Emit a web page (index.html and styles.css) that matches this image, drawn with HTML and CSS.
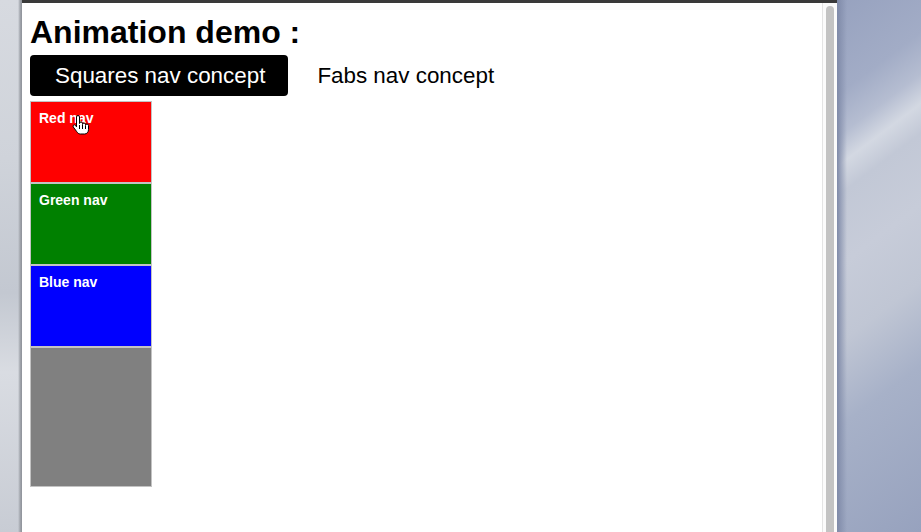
FILE: index.html
```html
<!DOCTYPE html>
<html>
<head>
<meta charset="utf-8">
<title>Animation demo</title>
<link rel="stylesheet" href="styles.css">
</head>
<body>
<div class="screen">
  <div class="desk-left"></div>
  <div class="window">
    <div class="titlebar"></div>
    <div class="viewport">
      <div class="page">
        <h1 class="title">Animation demo :</h1>
        <div class="tabs">
          <button class="tab tab-active">Squares nav concept</button>
          <button class="tab">Fabs nav concept</button>
        </div>
        <div class="squares">
          <div class="square sq-red">Red nav
            <svg class="cursor" width="17" height="20" viewBox="0 0 17 20">
              <path d="M4.5 2 a1.5 1.5 0 0 1 3 0 V8.5 a1.5 1.5 0 0 1 3 0 V9.5 a1.5 1.5 0 0 1 3 0 V10.5 a1.5 1.5 0 0 1 3 0 V14.5 c0 2.6-1.6 4.5-4 4.5 H8.5 c-1.9 0-2.9-1-3.8-2.4 L1.3 12 a1.3 1.3 0 0 1 2.1-1.6 L4.5 11.8 Z" fill="#fff" stroke="#000" stroke-width="1" stroke-linejoin="round"/>
              <path d="M7.5 10 V14 M10.5 10 V14 M13.5 11 V14" stroke="#000" stroke-width="1" fill="none"/>
            </svg>
          </div>
          <div class="square sq-green">Green nav</div>
          <div class="square sq-blue">Blue nav</div>
          <div class="square sq-gray"></div>
        </div>
      </div>
      <div class="scrollbar"><div class="thumb"></div></div>
    </div>
  </div>
  <div class="desk-right"></div>
</div>
</body>
</html>
```
FILE: styles.css
```css
html, body {
  margin: 0;
  padding: 0;
  height: 100%;
  overflow: hidden;
}
body {
  font-family: "Liberation Sans", Arial, sans-serif;
}
.screen {
  display: flex;
  width: 921px;
  height: 532px;
}
.desk-left {
  width: 22px;
  flex: none;
  background:
    linear-gradient(to right, rgba(0,0,0,0) 0, rgba(0,0,0,0) 18px, #a3a7ae 20px, #8d9198 22px),
    linear-gradient(to bottom, #d7dae0 0, #cfd3da 30%, #c3c8d1 55%, #d9dce2 70%, #c8ccd4 100%);
}
.window {
  width: 815px;
  flex: none;
  display: flex;
  flex-direction: column;
  background: #fff;
}
.titlebar {
  height: 3px;
  background: #3a3a3a;
  flex: none;
}
.viewport {
  flex: 1;
  display: flex;
  min-height: 0;
}
.page {
  width: 800px;
  flex: none;
  padding: 11px 8px 0 8px;
  box-sizing: border-box;
  background: #fff;
}
.title {
  margin: 0;
  font-size: 32px;
  font-weight: bold;
  color: #000;
  line-height: 37px;
}
.tabs {
  display: flex;
  gap: 4px;
  margin-top: 4px;
}
.tab {
  font-family: "Liberation Sans", Arial, sans-serif;
  font-size: 22.4px;
  line-height: 25px;
  padding: 8px 23px 8px 25px;
  border: none;
  border-radius: 4px;
  background: transparent;
  color: #000;
  margin: 0;
}
.tab-active {
  background: #000;
  color: #fff;
}
.squares {
  margin-top: 5px;
  display: flex;
  flex-direction: column;
  width: 122px;
}
.square {
  position: relative;
  box-sizing: border-box;
  width: 122px;
  height: 82px;
  border: 1px solid #c3c3c3;
  padding: 8px 8px 0 8px;
  color: #fff;
  font-size: 14px;
  font-weight: bold;
  line-height: 16px;
}
.sq-red { background: #ff0000; }
.sq-green { background: #008000; }
.sq-blue { background: #0000ff; }
.sq-gray { background: #808080; height: 140px; }
.cursor {
  position: absolute;
  left: 41px;
  top: 13px;
}
.scrollbar {
  width: 15px;
  flex: none;
  box-sizing: border-box;
  border-left: 1px solid #e4e4e4;
  background: #fbfbfb;
  padding: 3px 3px 0 3px;
}
.thumb {
  width: 8px;
  height: 100%;
  background: #c3c3c3;
  border-radius: 4px 4px 0 0;
}
.desk-right {
  flex: 1;
  background:
    linear-gradient(to right, #7f8aa8 0, rgba(127,138,168,0) 10px),
    linear-gradient(143deg, #97a2bf 0, #a2acc6 16%, #b5bdd1 23%, #d3d8e2 28%, #c2c8d6 33%, #c7ccd9 45%, #c0c6d4 58%, #a7b1c8 72%, #97a2be 100%);
}
```
